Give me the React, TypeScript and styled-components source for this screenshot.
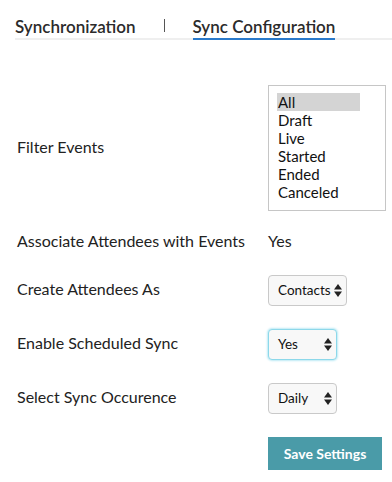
import React from "react";
import styled, { createGlobalStyle } from "styled-components";

const GlobalStyle = createGlobalStyle`
  html, body {
    margin: 0;
    padding: 0;
    background: #fff;
  }
  body {
    font-family: "Lato", "Open Sans", Arial, sans-serif;
    color: #222;
  }
`;

const STATUSES = ["All", "Draft", "Live", "Started", "Ended", "Canceled"];

const Page = styled.div`
  padding: 15px 0 0 15px;
  width: 377px;
`;

const Tabs = styled.div`
  display: flex;
  align-items: flex-end;
  border-bottom: 2px solid #efefef;
  height: 23px;
`;

const Tab = styled.div<{ $active?: boolean }>`
  font-size: 17px;
  font-weight: 600;
  color: #2b2b2b;
  line-height: 20px;
  padding-bottom: 1px;
  margin-bottom: -2px;
  border-bottom: 2px solid ${(p) => (p.$active ? "#2a7acb" : "transparent")};
`;

const Divider = styled.div`
  width: 1px;
  height: 13px;
  background: #555;
  margin: 0 28px 6px;
`;

const Form = styled.div`
  display: flex;
  flex-direction: column;
  padding-left: 2px;
`;

const Row = styled.div<{ $space: number }>`
  display: grid;
  grid-template-columns: 251px auto;
  align-items: center;
  margin-top: ${(p) => p.$space}px;
  min-height: 31px;
`;

const Label = styled.div`
  font-size: 16px;
  line-height: 20px;
  padding-bottom: 3px;
  color: #222;
`;

const Value = styled(Label)``;

const ListBox = styled.div`
  box-sizing: border-box;
  width: 118px;
  height: 126px;
  border: 1px solid #c6c6c6;
  padding: 7px 0 0 8px;
`;

const Option = styled.div<{ $selected?: boolean }>`
  width: 83px;
  height: 18px;
  line-height: 18px;
  font-size: 15px;
  padding-left: 1px;
  box-sizing: border-box;
  background: ${(p) => (p.$selected ? "#d4d4d4" : "transparent")};
  color: #111;
`;

const SelectBox = styled.div<{ $width: number; $focused?: boolean }>`
  box-sizing: border-box;
  width: ${(p) => p.$width}px;
  height: 31px;
  display: flex;
  align-items: center;
  justify-content: space-between;
  padding: 0 4px 1px 9px;
  font-size: 13.5px;
  color: #111;
  background: #f8f8f8;
  border-radius: 4px;
  border: 1px solid ${(p) => (p.$focused ? "#8cd8ea" : "#c9c9c9")};
  box-shadow: ${(p) => (p.$focused ? "0 0 2px 1px #bdeaf5" : "none")};
`;

const Arrows = () => (
  <svg width="8" height="13" viewBox="0 0 8 13">
    <path d="M4 0 L8 5.5 L0 5.5 Z" fill="#222" />
    <path d="M0 7.5 L8 7.5 L4 13 Z" fill="#222" />
  </svg>
);

const SaveButton = styled.button`
  width: 114px;
  height: 33px;
  border: none;
  background: #4a9ba8;
  color: #fff;
  font-family: inherit;
  font-size: 14px;
  font-weight: 700;
  padding: 0;
  cursor: pointer;
`;

const Select = ({
  value,
  width,
  focused,
}: {
  value: string;
  width: number;
  focused?: boolean;
}) => (
  <SelectBox $width={width} $focused={focused}>
    <span>{value}</span>
    <Arrows />
  </SelectBox>
);

export default function App() {
  return (
    <Page>
      <GlobalStyle />
      <Tabs>
        <Tab>Synchronization</Tab>
        <Divider />
        <Tab $active>Sync Configuration</Tab>
      </Tabs>
      <Form>
        <Row $space={45}>
          <Label>Filter Events</Label>
          <ListBox>
            {STATUSES.map((s, i) => (
              <Option key={s} $selected={i === 0}>
                {s}
              </Option>
            ))}
          </ListBox>
        </Row>
        <Row $space={16}>
          <Label>Associate Attendees with Events</Label>
          <Value>Yes</Value>
        </Row>
        <Row $space={17}>
          <Label>Create Attendees As</Label>
          <Select value="Contacts" width={79} />
        </Row>
        <Row $space={23}>
          <Label>Enable Scheduled Sync</Label>
          <Select value="Yes" width={69} focused />
        </Row>
        <Row $space={23}>
          <Label>Select Sync Occurence</Label>
          <Select value="Daily" width={69} />
        </Row>
        <Row $space={23}>
          <span />
          <SaveButton>Save Settings</SaveButton>
        </Row>
      </Form>
    </Page>
  );
}
